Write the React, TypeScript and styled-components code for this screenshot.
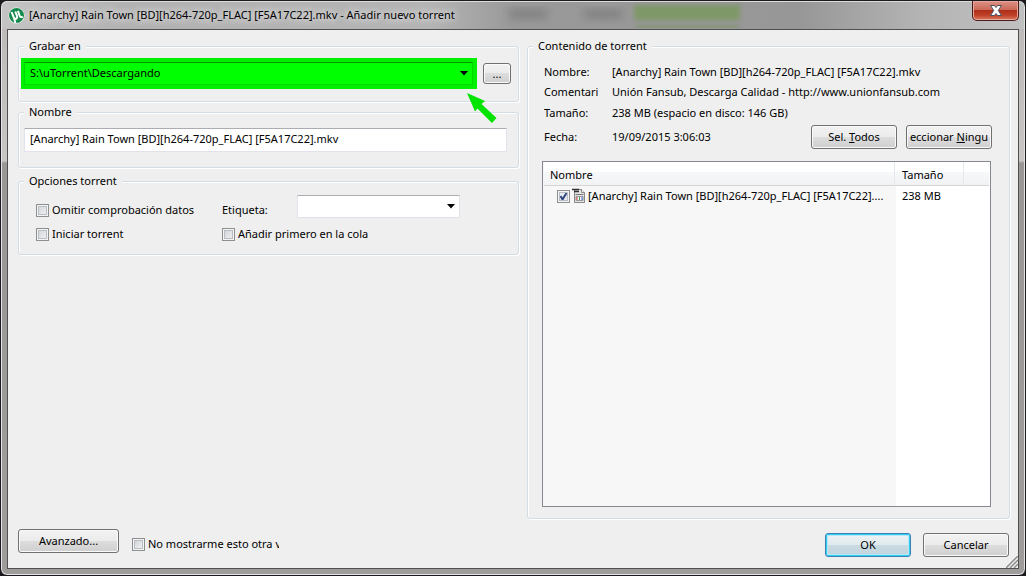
import React from "react";
import styled, { createGlobalStyle, css } from "styled-components";

const GlobalStyle = createGlobalStyle`
  * { box-sizing: border-box; }
  body {
    margin: 0;
    background: #1c1a1e;
    color: #000;
    font: 11px/16px "Noto Sans", "Open Sans", sans-serif;
  }
  button, input, select { font: inherit; color: inherit; }
`;

const Window = styled.div`
  display: flex;
  flex-direction: column;
  min-height: 100vh;
  padding: 0 6px 6px;
  border: 1px solid #1c1a1e;
  border-radius: 7px;
  box-shadow: inset 0 0 0 1px #e4e4e4;
  background: linear-gradient(#bcb8b8, #c9c5c5 160px, #9b9797 162px, #a09c9c);
`;

const TitleBar = styled.header`
  position: relative;
  display: flex;
  align-items: center;
  gap: 4px;
  height: 28px;
  margin: 0 -5px;
  padding: 0 6px 1px;
  border-radius: 6px 6px 0 0;
  border-top: 1px solid #dcdcdc;
  background: linear-gradient(90deg, #c4c4c4, #b2b2b2 12%, #b4b4b4 42%, #999 50%, #979797 78%, #b4b4b4 90%, #c0c0c0);
`;

const Title = styled.h1`
  z-index: 1;
  margin: 0;
  font-size: 11px;
  font-weight: 400;
  line-height: 16px;
  white-space: nowrap;
  text-shadow: 0 0 6px #e8e8e8, 0 0 8px #e8e8e8;
`;

const Smudge = styled.span<{ $left: number; $width: number; $green?: boolean }>`
  position: absolute;
  top: ${(p) => (p.$green ? 3 : 8)}px;
  left: ${(p) => p.$left}px;
  width: ${(p) => p.$width}px;
  height: ${(p) => (p.$green ? 15 : 8)}px;
  background: ${(p) => (p.$green ? "#7f9868" : "#7e7e7e")};
  box-shadow: ${(p) => (p.$green ? "0 19px 0 -1px #87957a" : "none")};
  filter: blur(${(p) => (p.$green ? 2 : 4)}px);
  clip-path: inset(-4px -6px -8px);
`;

const CloseButton = styled.button`
  position: absolute;
  top: -1px;
  right: 5px;
  display: grid;
  place-items: center;
  width: 47px;
  height: 20px;
  padding: 0;
  border: 1px solid #4c1c18;
  border-top: 0;
  border-radius: 0 0 5px 5px;
  box-shadow: inset 0 0 0 1px #e8a79c;
  background: linear-gradient(#dc9186, #cc6a5a 45%, #b02f1a 50%, #bf4029 75%, #dc7a5c);
`;

const Client = styled.main`
  flex: 1;
  display: grid;
  grid-template-columns: 501fr 483fr;
  gap: 8px;
  padding: 8px 8px 11px 10px;
  border: 1px solid #505050;
  background: #efefef;
  position: relative;
`;

const Column = styled.div`
  display: flex;
  flex-direction: column;
  min-width: 0;
`;

const Group = styled.fieldset<{ $gap?: number; $grow?: boolean }>`
  position: relative;
  min-width: 0;
  margin: 0 0 ${(p) => p.$gap ?? 0}px;
  padding: 0;
  border: 1px solid #d3dde5;
  border-radius: 3px;
  box-shadow: inset 1px 1px 0 #fff, 1px 1px 0 #fff;
  ${(p) =>
    p.$grow &&
    css`
      flex: 1;
      display: flex;
      flex-direction: column;
    `}
`;

const Legend = styled.legend`
  margin-left: 5px;
  padding: 0 5px;
  background: #efefef;
  line-height: 16px;
`;

const PathRow = styled.div`
  display: flex;
  align-items: center;
  gap: 6px;
  padding: 4px 7px 12px 2px;
`;

const Highlight = styled.div`
  flex: 1;
  padding: 4px 4px 4px 3px;
  background: #00f000;
`;

const SelectBox = styled.div`
  display: grid;
  align-items: center;
  > * { grid-area: 1 / 1; }
  > svg { justify-self: end; margin-right: 5px; pointer-events: none; }
`;

const Select = styled.select<{ $lit?: boolean }>`
  appearance: none;
  width: 100%;
  height: 23px;
  padding: 0 16px 2px 5px;
  border: 1px solid ${(p) => (p.$lit ? "#00d800" : "#e2e3ea")};
  border-top-color: ${(p) => (p.$lit ? "#009a00" : "#abadb3")};
  border-radius: 1px;
  background: ${(p) => (p.$lit ? "#00ff00" : "#fff")};
  outline: 0;
`;

const NameRow = styled.div`
  padding: 8px 11px 15px 5px;
`;

const TextInput = styled.input`
  display: block;
  width: 100%;
  height: 24px;
  padding: 0 5px 3px;
  border: 1px solid #e2e3ea;
  border-top-color: #abadb3;
  border-radius: 1px;
  background: #fff;
  outline: 0;
`;

const OptionsGrid = styled.div`
  display: grid;
  grid-template-columns: 186px 1fr;
  grid-template-rows: 24px 18px;
  align-items: end;
  row-gap: 6px;
  padding: 6px 17px 11px;
`;

const TagField = styled.div`
  align-self: start;
  display: grid;
  grid-template-columns: 75px 163px;
  align-items: end;
`;

const CheckLabel = styled.label`
  display: flex;
  align-items: center;
  gap: 3px;
  height: 18px;
  white-space: nowrap;
`;

const CheckBox = styled.input.attrs({ type: "checkbox" })`
  appearance: none;
  flex: none;
  width: 13px;
  height: 13px;
  margin: 0;
  border: 1px solid #8e8f8f;
  box-shadow: inset 0 0 0 1px #f4f4f4, inset 0 0 0 2px #b9bec6;
  background: linear-gradient(135deg, #cbcfd5, #f6f6f6);
  &:checked {
    background: url("data:image/svg+xml,%3Csvg xmlns='http://www.w3.org/2000/svg' viewBox='0 0 11 11'%3E%3Cpath d='M2.5 5l2 3.5L8.5 2' fill='none' stroke='%2331467f' stroke-width='2'/%3E%3C/svg%3E") #e8ebf0;
  }
`;

const ClippedText = styled.span`
  width: 131px;
  overflow: hidden;
`;

const Button = styled.button<{ $width: number; $primary?: boolean; $small?: boolean }>`
  flex: none;
  display: flex;
  align-items: center;
  justify-content: center;
  width: ${(p) => p.$width}px;
  height: ${(p) => (p.$small ? 21 : 24)}px;
  padding: 0;
  overflow: hidden;
  white-space: nowrap;
  border: 1px solid ${(p) => (p.$primary ? "#3c7fb1" : "#707070")};
  border-radius: 3px;
  box-shadow: ${(p) => (p.$primary ? "inset 0 0 0 1px #2fd0f5, inset 0 0 0 2px #b8e6f5" : "inset 0 0 0 1px #fafafa")};
  background: ${(p) =>
    p.$primary
      ? "linear-gradient(#eef3f5, #dfe9ee 50%, #c9dae3 50%, #c4d4dc)"
      : "linear-gradient(#f2f2f2, #ebebeb 50%, #dddddd 50%, #cfcfcf)"};
`;

const LeftFooter = styled.div`
  display: flex;
  align-items: flex-end;
  gap: 13px;
  margin-top: auto;
  padding-bottom: 4px;
`;

const RightFooter = styled.div`
  display: flex;
  justify-content: flex-end;
  gap: 12px;
  padding: 14px 1px 0 0;
`;

const Details = styled.dl`
  display: grid;
  grid-template-columns: 56px 1fr;
  grid-template-rows: 20px 20px 22px 26px;
  column-gap: 12px;
  align-items: center;
  margin: 0;
  padding: 8px 17px 0 16px;
  white-space: nowrap;
`;

const Term = styled.dt`
  overflow: hidden;
`;

const Value = styled.dd`
  display: flex;
  align-items: center;
  margin: 0;
`;

const SelectionButtons = styled.div`
  display: flex;
  gap: 9px;
  margin-left: auto;
`;

const FileList = styled.div`
  flex: 1;
  margin: 11px 18px 11px 14px;
  padding: 0 1px;
  border: 1px solid #828790;
  background: linear-gradient(90deg, #f7f7f7, #f7f7f7) left / calc(100% - 94px) 100% no-repeat #fff;
`;

const Table = styled.table`
  width: 100%;
  table-layout: fixed;
  border-collapse: separate;
  border-spacing: 0;
`;

const HeadCell = styled.th<{ $width?: number; $indent?: number }>`
  width: ${(p) => (p.$width ? `${p.$width}px` : "auto")};
  height: 24px;
  padding: 2px 0 0 ${(p) => p.$indent ?? 6}px;
  border-right: 1px solid #e3e8ee;
  border-bottom: 1px solid #d5d5d5;
  background: linear-gradient(#fff 42%, #f7f8fa 42%, #f1f2f4);
  font-weight: 400;
  text-align: left;
  &:last-child { border-right: 0; }
`;

const Cell = styled.td`
  height: 20px;
  padding: 0 0 0 7px;
  white-space: nowrap;
`;

const FileEntry = styled.label`
  display: flex;
  align-items: center;
  gap: 2px;
  padding-left: 6px;
`;

const Grip = styled.svg`
  position: absolute;
  right: 0;
  bottom: 0;
`;

const Pointer = styled.svg`
  position: absolute;
  z-index: 1;
  right: 20px;
  top: 39px;
`;

const DropArrow = () => (
  <svg width="8" height="5" viewBox="0 0 8 5" aria-hidden="true">
    <path d="M0 0h8L4 4.5z" fill="#000" />
  </svg>
);

const Logo = () => (
  <svg width="17" height="17" viewBox="0 0 17 17" aria-hidden="true">
    <circle cx="8.5" cy="8.5" r="8" fill="#f4f8f5" />
    <circle cx="8.5" cy="8.5" r="7.5" fill="#148a4c" />
    <path
      d="M3.6 5l2 5.2c.6 1.6 1.9 2 3 1.2.7-.6.8-1.4.4-2.4L7.3 4.5M9.9 3.8l1.8 5.2c.4 1.1 1.4 1.4 3 .8M6 11l1.4 5"
      fill="none"
      stroke="#fff"
      strokeWidth="2"
    />
  </svg>
);

const MediaIcon = () => (
  <svg width="14" height="16" viewBox="0 0 14 16" aria-hidden="true">
    <path d="M2.5 1.5h7l3 3v10h-10z" fill="#e4e4e4" stroke="#888" />
    <path d="M9.5 1.5v3h3" fill="#fff" stroke="#888" />
    <path d="M0 1.5h7M2 3.5h5" stroke="#333" strokeWidth="1.5" />
    <path d="M3.5 6.5h8" stroke="#777" />
    <path d="M4 8.5h7v4H4z" fill="#fff" stroke="#999" />
    <path d="M5 9v3" stroke="#c33" />
    <path d="M7.5 9v3" stroke="#3a9a4a" />
    <path d="M10 9v3" stroke="#35c" />
  </svg>
);

export default function App() {
  return (
    <>
      <GlobalStyle />
      <Window>
        <TitleBar>
          <Smudge $left={507} $width={38} />
          <Smudge $left={582} $width={38} />
          <Smudge $left={632} $width={106} $green />
          <Logo />
          <Title>[Anarchy] Rain Town [BD][h264-720p_FLAC] [F5A17C22].mkv - Añadir nuevo torrent</Title>
          <CloseButton aria-label="Cerrar">
            <svg width="12" height="11" viewBox="0 0 12 11" aria-hidden="true">
              <path
                d="M.5 .5h4L6 2.5 7.5 .5h4L8.3 5.5l3.2 5h-4L6 8.5l-1.5 2h-4l3.2-5z"
                fill="#fff"
                stroke="#4a4f60"
              />
            </svg>
          </CloseButton>
        </TitleBar>
        <Client>
          <Column>
            <Group $gap={2}>
              <Legend>Grabar en</Legend>
              <PathRow>
                <Highlight>
                  <SelectBox>
                    <Select $lit aria-label="Grabar en">
                      <option>S:\uTorrent\Descargando</option>
                    </Select>
                    <DropArrow />
                  </SelectBox>
                </Highlight>
                <Button $width={28} $small>...</Button>
              </PathRow>
              <Pointer width="31" height="31" viewBox="0 0 31 31" aria-hidden="true">
                <path d="M0 0l18 8-3.500 3L29.500 25 25 30 10.500 15.500 8 18.500z" fill="#00e400" />
              </Pointer>
            </Group>
            <Group $gap={5}>
              <Legend>Nombre</Legend>
              <NameRow>
                <TextInput
                  aria-label="Nombre"
                  defaultValue="[Anarchy] Rain Town [BD][h264-720p_FLAC] [F5A17C22].mkv"
                />
              </NameRow>
            </Group>
            <Group>
              <Legend>Opciones torrent</Legend>
              <OptionsGrid>
                <CheckLabel>
                  <CheckBox />
                  Omitir comprobación datos
                </CheckLabel>
                <TagField>
                  <label htmlFor="tag">Etiqueta:</label>
                  <SelectBox>
                    <Select id="tag" />
                    <DropArrow />
                  </SelectBox>
                </TagField>
                <CheckLabel>
                  <CheckBox />
                  Iniciar torrent
                </CheckLabel>
                <CheckLabel>
                  <CheckBox />
                  Añadir primero en la cola
                </CheckLabel>
              </OptionsGrid>
            </Group>
            <LeftFooter>
              <Button $width={101}>Avanzado...</Button>
              <CheckLabel>
                <CheckBox />
                <ClippedText>No mostrarme esto otra v</ClippedText>
              </CheckLabel>
            </LeftFooter>
          </Column>
          <Column>
            <Group $grow>
              <Legend>Contenido de torrent</Legend>
              <Details>
                <Term>Nombre:</Term>
                <Value>[Anarchy] Rain Town [BD][h264-720p_FLAC] [F5A17C22].mkv</Value>
                <Term>Comentari</Term>
                <Value>Unión Fansub, Descarga Calidad - http://www.unionfansub.com</Value>
                <Term>Tamaño:</Term>
                <Value>238 MB (espacio en disco: 146 GB)</Value>
                <Term>Fecha:</Term>
                <Value>
                  19/09/2015 3:06:03
                  <SelectionButtons>
                    <Button $width={86}>
                      <span>Sel. <u>T</u>odos</span>
                    </Button>
                    <Button $width={86}>
                      <span>eccionar <u>N</u>ingu</span>
                    </Button>
                  </SelectionButtons>
                </Value>
              </Details>
              <FileList>
                <Table>
                  <thead>
                    <tr>
                      <HeadCell>Nombre</HeadCell>
                      <HeadCell $width={69} $indent={7}>Tamaño</HeadCell>
                      <HeadCell $width={25} $indent={0} />
                    </tr>
                  </thead>
                  <tbody>
                    <tr>
                      <Cell>
                        <FileEntry>
                          <CheckBox defaultChecked />
                          <MediaIcon />
                          [Anarchy] Rain Town [BD][h264-720p_FLAC] [F5A17C22]....
                        </FileEntry>
                      </Cell>
                      <Cell>238 MB</Cell>
                      <Cell />
                    </tr>
                  </tbody>
                </Table>
              </FileList>
            </Group>
            <RightFooter>
              <Button $width={86} $primary>OK</Button>
              <Button $width={86}>Cancelar</Button>
            </RightFooter>
          </Column>
          <Grip width="12" height="12" viewBox="0 0 12 12" aria-hidden="true">
            <path d="M0 12L12 0M4 12l8-8M8 12l4-4" stroke="#8c8c8c" strokeWidth="1.5" />
          </Grip>
        </Client>
      </Window>
    </>
  );
}
